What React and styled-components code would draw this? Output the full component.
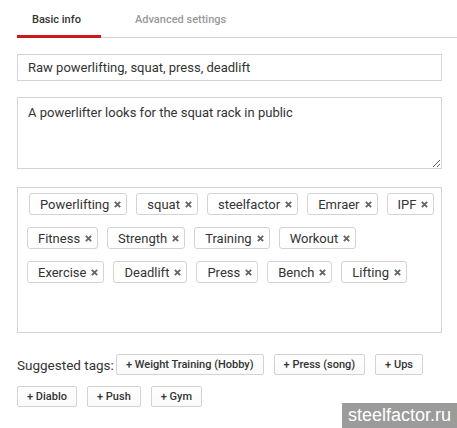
import styled, { createGlobalStyle } from "styled-components";

const GlobalStyle = createGlobalStyle`
  html, body {
    margin: 0;
    padding: 0;
    background: #fff;
  }
  body {
    font-family: Roboto, "Liberation Sans", Arial, sans-serif;
    color: #333;
  }
`;

const tagRows = [
  ["Powerlifting", "squat", "steelfactor", "Emraer", "IPF"],
  ["Fitness", "Strength", "Training", "Workout"],
  ["Exercise", "Deadlift", "Press", "Bench", "Lifting"],
];

const suggestedRows = [
  ["Weight Training (Hobby)", "Press (song)", "Ups"],
  ["Diablo", "Push", "Gym"],
];

const Page = styled.div`
  position: relative;
  width: 457px;
  height: 428px;
  padding-left: 17px;
  box-sizing: border-box;
  overflow: hidden;
`;

const TabBar = styled.div`
  display: flex;
  height: 38px;
  border-bottom: 1px solid #d3d3d3;
  box-sizing: border-box;
`;

const Tab = styled.div`
  box-sizing: border-box;
  height: 38px;
  margin-bottom: -1px;
  margin-right: 19px;
  padding: 13px 15px 0 15px;
  width: ${(p) => (p.$active ? "84px" : "auto")};
  font-size: 11px;
  line-height: 14px;
  font-weight: 500;
  white-space: nowrap;
  color: ${(p) => (p.$active ? "#333" : "#999")};
  border-bottom: 3px solid ${(p) => (p.$active ? "#cc181e" : "transparent")};
`;

const Form = styled.div`
  width: 425px;
  display: flex;
  flex-direction: column;
`;

const TitleInput = styled.input`
  margin-top: 16px;
  height: 27px;
  box-sizing: border-box;
  border: 1px solid #d3d3d3;
  border-radius: 0;
  padding: 0 10px;
  font-family: Roboto, "Liberation Sans", Arial, sans-serif;
  font-size: 13px;
  color: #333;
  outline: none;
`;

const Description = styled.textarea`
  margin-top: 16px;
  height: 72px;
  box-sizing: border-box;
  border: 1px solid #d3d3d3;
  border-radius: 0;
  padding: 7px 10px;
  font-family: Roboto, "Liberation Sans", Arial, sans-serif;
  font-size: 13px;
  line-height: 16px;
  color: #333;
  outline: none;
  resize: vertical;
`;

const TagBox = styled.div`
  margin-top: 18px;
  height: 146px;
  box-sizing: border-box;
  border: 1px solid #d3d3d3;
  padding: 5px 9px;
  display: flex;
  flex-direction: column;
  gap: 12px;
`;

const TagRow = styled.div`
  display: flex;
  gap: 9px;
  &:first-child {
    padding-left: 2px;
  }
`;

const Tag = styled.span`
  display: inline-flex;
  align-items: center;
  height: 22px;
  box-sizing: border-box;
  padding: 0 5px 0 10px;
  border: 1px solid #d3d3d3;
  border-radius: 3px;
  background: #fff;
  font-size: 13px;
  color: #333;
  gap: 5px;
  white-space: nowrap;
`;

const Remove = styled.svg`
  width: 7px;
  height: 7px;
  color: #666;
`;

const Suggested = styled.div`
  margin-top: 21px;
  display: flex;
  flex-direction: column;
  gap: 11px;
`;

const SuggestRow = styled.div`
  display: flex;
  align-items: center;
  gap: 10px;
`;

const Label = styled.span`
  font-size: 13.5px;
  color: #333;
  margin-right: -8px;
  white-space: nowrap;
`;

const SuggestButton = styled.button`
  height: 21px;
  box-sizing: border-box;
  padding: 0 9px;
  border: 1px solid #d3d3d3;
  border-radius: 2px;
  background: linear-gradient(#fff, #fafafa);
  font-family: Roboto, "Liberation Sans", Arial, sans-serif;
  font-size: 11px;
  font-weight: 500;
  color: #333;
  white-space: nowrap;
  cursor: pointer;
`;

const Watermark = styled.div`
  position: absolute;
  right: 0;
  bottom: 0;
  width: 115px;
  height: 25px;
  background: #9b9b9b;
  color: #fff;
  font-family: "Liberation Sans", Arial, sans-serif;
  font-size: 18px;
  line-height: 25px;
  text-align: center;
`;

const RemoveIcon = () => (
  <Remove viewBox="0 0 8 8">
    <path d="M1 1L7 7M7 1L1 7" stroke="currentColor" strokeWidth="2.2" />
  </Remove>
);

const App = () => {
  return (
    <Page>
      <GlobalStyle />
      <TabBar>
        <Tab $active>Basic info</Tab>
        <Tab>Advanced settings</Tab>
      </TabBar>
      <Form>
        <TitleInput defaultValue="Raw powerlifting, squat, press, deadlift" />
        <Description defaultValue="A powerlifter looks for the squat rack in public" />
        <TagBox>
          {tagRows.map((row, i) => (
            <TagRow key={i}>
              {row.map((tag) => (
                <Tag key={tag}>
                  {tag}
                  <RemoveIcon />
                </Tag>
              ))}
            </TagRow>
          ))}
        </TagBox>
        <Suggested>
          {suggestedRows.map((row, i) => (
            <SuggestRow key={i}>
              {i === 0 && <Label>Suggested tags:</Label>}
              {row.map((tag) => (
                <SuggestButton key={tag}>+ {tag}</SuggestButton>
              ))}
            </SuggestRow>
          ))}
        </Suggested>
      </Form>
      <Watermark>steelfactor.ru</Watermark>
    </Page>
  );
};

export default App;
